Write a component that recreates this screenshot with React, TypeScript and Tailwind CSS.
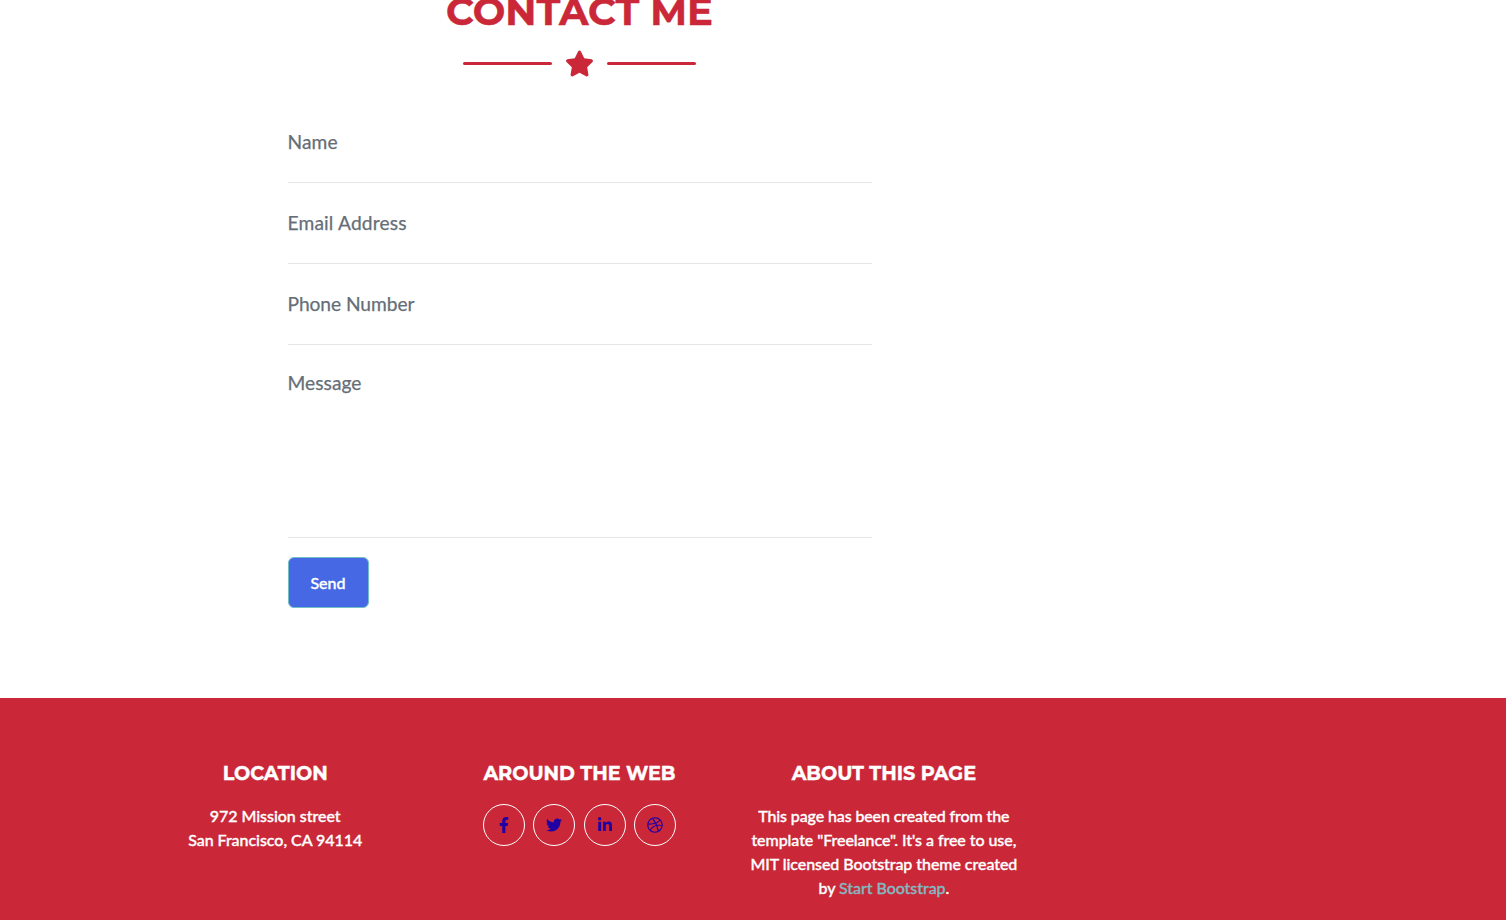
import type { ReactNode } from 'react';
import { FaStar, FaFacebookF, FaTwitter, FaLinkedinIn, FaDribbble } from 'react-icons/fa';

const heading = "font-['Montserrat','Inter',sans-serif] uppercase whitespace-nowrap";
const footerHeading = `${heading} -mt-px mb-[19px] text-[19.2px] leading-[24px] font-bold [-webkit-text-stroke:0.4px]`;
const labelText = 'block text-[19.2px] leading-[28px] text-[#656e77] [-webkit-text-stroke:0.25px]';

function Field({ label, tracking }: { label: string; tracking: string }) {
  return (
    <div className="h-[81px] border-b border-[#e4e6e8] pt-[26px]">
      <label className={`${labelText} ${tracking}`}>{label}</label>
    </div>
  );
}

function Social({ label, children }: { label: string; children: ReactNode }) {
  return (
    <a
      href="#"
      aria-label={label}
      className="flex h-[42px] w-[42px] items-center justify-center rounded-full border border-white text-[16px] text-[#2100a3]"
    >
      {children}
    </a>
  );
}

export default function App() {
  return (
    <div className="h-[920px] overflow-hidden bg-white font-['Lato',sans-serif]">
      <section className="flex h-[698px] w-[1159px] flex-col items-center">
        <h2 className={`${heading} -mt-[12px] h-[48px] text-[38.6px] leading-[47px] font-bold text-[#ca2838] [-webkit-text-stroke:0.4px]`}>Contact Me</h2>
        <div className="mt-[14px] flex h-[26px] items-center gap-[13px] text-[#ca2838]">
          <span className="h-[3px] w-[89px] rounded-full bg-[#ca2838]" />
          <FaStar className="h-[27px] w-[29px]" />
          <span className="h-[3px] w-[89px] rounded-full bg-[#ca2838]" />
        </div>
        <form className="mt-[26px] w-[584px]">
          <Field label="Name" tracking="tracking-[0.08px]" />
          <Field label="Email Address" tracking="tracking-[0.16px]" />
          <Field label="Phone Number" tracking="tracking-[-0.06px]" />
          <div className="h-[193px] border-b border-[#e4e6e8] pt-[24px]">
            <label className={`${labelText} tracking-[0.04px]`}>Message</label>
          </div>
          <button
            type="button"
            className="mt-[19px] h-[51px] w-[81px] rounded-[6px] border border-[#6fbfc4] bg-[#4668e5] text-[16px] font-medium text-white [-webkit-text-stroke:0.35px]"
          >
            Send
          </button>
        </form>
      </section>
      <footer className="h-[222px] bg-[#ca2838] pt-[64px] text-center text-[16px] leading-[24px] font-medium text-white">
        <div className="ml-[123px] grid w-[913px] grid-cols-3">
          <div className="flex flex-col items-center">
            <h4 className={footerHeading}>Location</h4>
            <p className="tracking-[-0.04px] whitespace-nowrap [-webkit-text-stroke:0.35px]">
              972 Mission street
              <br />
              San Francisco, CA 94114
            </p>
          </div>
          <div className="flex flex-col items-center">
            <h4 className={footerHeading}>Around the Web</h4>
            <div className="flex gap-[8.4px]">
              <Social label="Facebook"><FaFacebookF /></Social>
              <Social label="Twitter"><FaTwitter /></Social>
              <Social label="LinkedIn"><FaLinkedinIn /></Social>
              <Social label="Dribbble"><FaDribbble /></Social>
            </div>
          </div>
          <div className="flex flex-col items-center">
            <h4 className={footerHeading}>About this page</h4>
            <p className="tracking-[-0.06px] whitespace-nowrap [-webkit-text-stroke:0.35px]">
              <span className="tracking-[-0.12px]">This page has been created from the</span>
              <br />
              template "Freelance". It's a free to use,
              <br />
              MIT licensed Bootstrap theme created
              <br />
              by <a href="#" className="text-[#84b8c0]">Start Bootstrap</a>.
            </p>
          </div>
        </div>
      </footer>
    </div>
  );
}
